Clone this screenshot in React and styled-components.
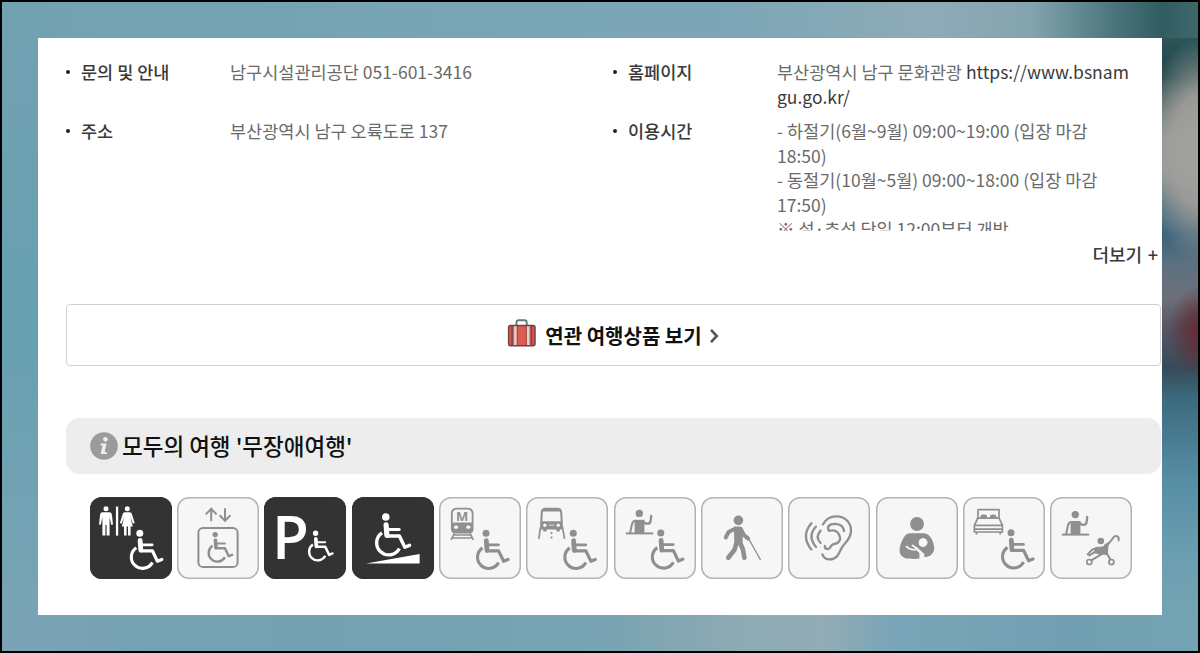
import React from "react";
import styled, { createGlobalStyle } from "styled-components";

const GlobalStyle = createGlobalStyle`
  * {
    box-sizing: border-box;
  }
  body {
    margin: 0;
    font-family: "Noto Sans CJK KR", "Noto Sans", sans-serif;
  }
`;

function Wheelchair({ x, y, scale = 1 }) {
  return (
    <g transform={`translate(${x} ${y}) scale(${scale})`}>
      <circle r="3.5" fill="currentColor" />
      <path d="M0.3 7.3L1 17" strokeWidth="4.8" />
      <path d="M1 11.6H12.4" strokeWidth="2.8" />
      <path d="M1 17.6H12.6L17.6 28L22 26.2" strokeWidth="3.2" />
      <path
        d="M-3.5 14.6A11.2 11.2 0 1 0 12.6 29.2"
        strokeWidth="3.1"
        strokeLinecap="butt"
      />
    </g>
  );
}

function Reception({ y = 0 }) {
  return (
    <g transform={`translate(0 ${y})`}>
      <circle cx="25.3" cy="16.4" r="3.7" fill="currentColor" />
      <path d="M20.6 22.8H30.4V36H20.6Z" fill="currentColor" stroke="none" />
      <path d="M21.5 23.8C18.4 23.8 18.2 26 17.8 28L16.2 35.5" strokeWidth="2" />
      <path d="M29.5 24.4C31 27.4 36.2 27.6 36.6 24L37.2 18.8" strokeWidth="2.3" />
      <path d="M11.8 36.4H39.2" strokeWidth="2" strokeLinecap="butt" />
    </g>
  );
}

function Toilet() {
  return (
    <>
      <g fill="currentColor" stroke="none">
        <circle cx="16" cy="11.8" r="2.5" />
        <path d="M12.6 15.3H19.4C21.4 15.3 21.8 16.7 22 18.2L23 27.4L21.2 27.8L19.6 20V38.6H16.6V28H15.4V38.6H12.4V20L10.8 27.8L9 27.4L10 18.2C10.2 16.7 10.6 15.3 12.6 15.3Z" />
        <path d="M25.9 9.5H28.2V38.6H25.9Z" />
        <circle cx="37.3" cy="11.8" r="2.5" />
        <path d="M35 15.3H39.6C41 15.3 41.6 16 42 17.4L44.7 26L43 26.8L40.2 19.6L42.8 29.6H40.6V38.6H38V29.6H36.6V38.6H34V29.6H31.8L34.4 19.6L31.6 26.8L29.9 26L32.6 17.4C33 16 33.6 15.3 35 15.3Z" />
      </g>
      <Wheelchair x={49.8} y={36.2} />
    </>
  );
}

function Elevator() {
  return (
    <>
      <path
        d="M34.2 24.3V12M28.8 17.4L34.2 11.8L39.6 17.4M48 11.3V23.6M42.6 18.2L48 23.8L53.4 18.2"
        strokeWidth="2"
        strokeLinecap="butt"
        strokeLinejoin="miter"
      />
      <rect x="21.4" y="31" width="39.2" height="39" rx="4.6" strokeWidth="2" />
      <Wheelchair x={38.2} y={37.6} scale={0.77} />
    </>
  );
}

function Parking() {
  return (
    <>
      <ParkingLetter x="8" y="62">
        P
      </ParkingLetter>
      <Wheelchair x={51.6} y={36.3} scale={0.77} />
    </>
  );
}

function Ramp() {
  return (
    <>
      <Wheelchair x={33.8} y={20} scale={1.08} />
      <path d="M14 66.4L67.6 57V66.4Z" fill="currentColor" stroke="none" />
    </>
  );
}

function Subway() {
  return (
    <>
      <path
        d="M18 11.6H28.4C32 11.6 33.6 14 33.6 17V31.8C33.6 34.2 32.2 35.6 30 35.6H16.4C14.2 35.6 12.8 34.2 12.8 31.8V17C12.8 14 14.4 11.6 18 11.6Z"
        strokeWidth="1.8"
      />
      <path
        d="M12.8 25.6H33.6V33C33.6 35 32 35.8 30 35.8H16.4C14.4 35.8 12.8 35 12.8 33Z"
        fill="currentColor"
        stroke="none"
      />
      <g fill="#f6f6f6" stroke="none">
        <rect x="15" y="28.4" width="4.2" height="3.4" rx="1.6" />
        <rect x="27.2" y="28.4" width="4.2" height="3.4" rx="1.6" />
      </g>
      <MetroLetter x="23.2" y="23.8">
        M
      </MetroLetter>
      <path
        d="M15.4 36.5L12 42.8M31 36.5L34.4 42.8M15 38H31.4M13.6 41H32.8"
        strokeWidth="1.6"
        strokeLinecap="butt"
      />
      <Wheelchair x={47} y={36.3} />
    </>
  );
}

function Bus() {
  return (
    <>
      <path
        d="M19 11.8H32C34.4 11.8 35 13.4 35.2 15.4L35.8 26V31.4H15.2V26L15.8 15.4C16 13.4 16.6 11.8 19 11.8Z"
        strokeWidth="2"
      />
      <path
        d="M17 12H34V14.4H17ZM15 24.2H36V32H33.8V34.4H30.4V32H20.6V34.4H17.2V32H15Z"
        fill="currentColor"
        stroke="none"
      />
      <g fill="#f6f6f6" stroke="none">
        <circle cx="18.8" cy="28.2" r="1.7" />
        <circle cx="32.2" cy="28.2" r="1.7" />
        <rect x="22.8" y="27.6" width="5.4" height="1.2" opacity="0.6" />
      </g>
      <path
        d="M14.6 30L12.8 41.8M36.4 30L38.6 41.8"
        strokeWidth="1.7"
        strokeLinecap="butt"
      />
      <path
        d="M25.5 35V37M25.5 39.4V41.6"
        strokeWidth="1.8"
        strokeLinecap="butt"
      />
      <Wheelchair x={47.3} y={36.3} />
    </>
  );
}

function Guide() {
  return (
    <>
      <Reception />
      <Wheelchair x={46.8} y={36} />
    </>
  );
}

function WhiteCane() {
  return (
    <>
      <circle cx="37.4" cy="23.4" r="4.8" fill="currentColor" />
      <path
        d="M33.4 29.6H38.8C41 30 41.6 31 42 33L41.4 47.6H33.4L33 36Z"
        fill="currentColor"
        stroke="none"
      />
      <path d="M34 31.8L27.6 35L24.8 40.4" strokeWidth="4" />
      <path d="M40 32.4L42.8 38L47 41.4" strokeWidth="4" />
      <path d="M35.6 46L33.4 53L27.2 60.8" strokeWidth="4.6" />
      <path d="M39.2 46L42 52.6L43.4 60.8" strokeWidth="4.6" />
      <path d="M47.6 41.6L59.4 62.6" strokeWidth="1.2" />
    </>
  );
}

function Ear() {
  return (
    <g strokeWidth="2.3">
      <path d="M35 27.4C38 21.6 43 19.2 48.4 19.3C57.6 19.5 63.4 26 63 34.4C62.6 41.4 58.4 44.6 55.2 48.4C51.2 53.2 51 62.4 41.8 62.4C37.8 62.4 35.4 60.4 34.4 57.4" />
      <path d="M40.4 33C38.6 27.6 44 26.8 47.6 26.8C52 27 55.4 29.6 56 34" />
      <path d="M41 33.8C44.6 33 48.6 33.4 50.6 36.8C54 42 51 46.6 46.2 47C41.8 47.4 43.4 52 39.8 52.2C37.8 52.2 36.8 50.8 36.8 49" />
      <path d="M23.4 26.2Q12.4 39 23.4 52.4" />
      <path d="M28 29.6Q19 39.6 28 50" />
      <path d="M32.6 33.6Q26.8 39.8 32.6 46" />
    </g>
  );
}

function Nursing() {
  return (
    <>
      <circle cx="41" cy="27" r="6.9" fill="currentColor" />
      <path
        d="M33.6 36.2H48.4C54 36.4 58 45 58.2 51C58.2 56.4 54 60.6 47.6 59.8V57.6L43.4 55.8V61.6C40 62.2 36 62 33 61.6C26.6 61.6 23 57.8 23.6 52C24.6 45.4 28.4 36.4 33.6 36.2Z"
        fill="currentColor"
        stroke="none"
      />
      <g stroke="#f6f6f6">
        <circle cx="47" cy="45.6" r="4" fill="#f6f6f6" />
        <path d="M30.6 49.6C33.4 52.6 38 53.4 41.6 52L36.6 48.4" strokeWidth="1.8" />
        <path d="M40.6 51.8L47.2 57.8L46.4 61.4" strokeWidth="2.6" />
      </g>
    </>
  );
}

function Room() {
  return (
    <>
      <path
        d="M15 21V12.6H36V21L39.4 28.2V35H11.4V28.2L15 21ZM14.4 21.2H36.4M11.4 28.4H39.4M11.4 32.2H39.4"
        strokeWidth="1.7"
      />
      <path
        d="M17.6 21V19C18 17 23.6 17 24 19V21ZM27 21V19C27.4 17 33 17 33.4 19V21Z"
        fill="currentColor"
        stroke="none"
      />
      <path d="M13.6 35V37.4M37.2 35V37.4" strokeWidth="1.8" strokeLinecap="butt" />
      <Wheelchair x={48} y={35.8} />
    </>
  );
}

function Stroller() {
  return (
    <>
      <Reception y={1.2} />
      <circle cx="50.8" cy="44" r="3.3" fill="currentColor" />
      <path
        d="M54.6 47.4L58.8 44.6L57.8 58L50 57.4L43.6 56L45.6 50L53 49.4Z"
        fill="currentColor"
        stroke="none"
      />
      <path d="M56 50L62.6 41.6C65.2 37.2 69.6 38.8 68.6 43.4" strokeWidth="2" />
      <path d="M47 51L42.2 52.8L37.6 57.4M45.6 54.6L39.4 58.4" strokeWidth="2" />
      <path d="M52 56.8L41.4 63.4M56.6 56L60.4 62.6" strokeWidth="2" />
      <circle cx="39.3" cy="65" r="2.5" strokeWidth="1.7" />
      <circle cx="61.4" cy="65" r="2.5" strokeWidth="1.7" />
    </>
  );
}

const facilities = [
  { id: "toilet", icon: Toilet, active: true },
  { id: "elevator", icon: Elevator },
  { id: "parking", icon: Parking, active: true },
  { id: "ramp", icon: Ramp, active: true },
  { id: "subway", icon: Subway },
  { id: "bus", icon: Bus },
  { id: "guide", icon: Guide },
  { id: "cane", icon: WhiteCane },
  { id: "ear", icon: Ear },
  { id: "nursing", icon: Nursing },
  { id: "room", icon: Room },
  { id: "stroller", icon: Stroller },
];

function SuitcaseIcon() {
  return (
    <svg width="30" height="32" viewBox="0 0 30 32">
      <path
        d="M9.5 8V3.4C9.5 2 10.3 1.2 11.6 1.2H17.6C18.9 1.2 19.7 2 19.7 3.4V8"
        fill="none"
        stroke="#66787c"
        strokeWidth="1.9"
      />
      <rect x="1.6" y="6.4" width="26.4" height="20.4" rx="2" fill="#dd5c51" />
      <path d="M5 6.6V26.6M24.6 6.6V26.6" stroke="#8c403d" strokeWidth="1.6" />
      <path d="M8.4 6.6V26.6M21.2 6.6V26.6" stroke="#d9dada" strokeWidth="2.4" />
      <path d="M10.4 6.6V26.6M19.2 6.6V26.6" stroke="#8d4a48" strokeWidth="0.8" />
      <rect
        x="1.6"
        y="6.4"
        width="26.4"
        height="20.4"
        rx="2"
        fill="none"
        stroke="#6b4446"
        strokeWidth="1.5"
      />
    </svg>
  );
}

function InfoIcon() {
  return (
    <svg width="28" height="28" viewBox="0 0 28 28">
      <circle cx="14" cy="14" r="13.8" fill="#9b9b9b" />
      <circle cx="15.4" cy="7.2" r="2.3" fill="#eee" />
      <path
        d="M10.8 11.6H16.6L14.6 20.2H17.2L16.8 22H10.6L12.6 13.4H10.4Z"
        fill="#eee"
      />
    </svg>
  );
}

function Info({ label, children }) {
  return (
    <InfoRow>
      <dt>{label}</dt>
      <dd>{children}</dd>
    </InfoRow>
  );
}

function App() {
  return (
    <>
      <GlobalStyle />
      <Backdrop>
        <Card>
          <InfoGrid>
            <Info label="문의 및 안내">남구시설관리공단 051-601-3416</Info>
            <Info label="홈페이지">
              부산광역시 남구 문화관광{" "}
              <a>
                https://www.bsnam
                <br />
                gu.go.kr/
              </a>
            </Info>
            <Info label="주소">부산광역시 남구 오륙도로 137</Info>
            <Info label="이용시간">
              - 하절기(6월~9월) 09:00~19:00 (입장 마감
              <br />
              18:50)
              <br />
              - 동절기(10월~5월) 09:00~18:00 (입장 마감
              <br />
              17:50)
              <br />※ 설·추석 당일 12:00부터 개방
            </Info>
          </InfoGrid>
          <MoreButton>더보기 +</MoreButton>
          <ProductButton>
            <SuitcaseIcon />
            <span>연관 여행상품 보기</span>
            <svg width="11" height="16" viewBox="0 0 11 16">
              <path
                d="M2 2.8L7.8 9L2 15.2"
                fill="none"
                stroke="#555"
                strokeWidth="2.6"
              />
            </svg>
          </ProductButton>
          <SectionTitle>
            <InfoIcon />
            <span>모두의 여행 '무장애여행'</span>
          </SectionTitle>
          <FacilityList>
            {facilities.map(({ id, icon: Icon, active }) => (
              <Facility key={id} $active={active}>
                <svg viewBox="0 0 82 82">
                  <Icon />
                </svg>
              </Facility>
            ))}
          </FacilityList>
        </Card>
      </Backdrop>
    </>
  );
}

const Backdrop = styled.div`
  width: 1200px;
  height: 653px;
  padding: 36px;
  overflow: hidden;
  border: 2px solid #000;
  background:
    radial-gradient(ellipse 30px 46px at 1196px 330px, #6a2932 0, rgba(95, 45, 55, 0.7) 40%, transparent 100%),
    radial-gradient(ellipse 62px 112px at 1200px 148px, #a5a39e 0, rgba(160, 159, 154, 0.9) 50%, transparent 100%),
    linear-gradient(
        to bottom,
        #2d5558 0,
        #1d454a 40px,
        #4d6468 70px,
        #8d9394 100px,
        #96999a 130px,
        #4d6f80 165px,
        #37607a 195px,
        #5c7180 225px,
        #6c7079 260px,
        #585562 290px,
        #364b5a 330px,
        #3c6a7e 360px,
        #568da3 440px,
        #6c9fb2 520px,
        #73a2b3 575px
      )
      right 36px / 42px 579px no-repeat,
    linear-gradient(
        to right,
        #72a1b2 0,
        #79a5b4 40%,
        #7ca6b6 60%,
        #8eabb7 78%,
        #83a4ae 86%,
        #4b757c 93%,
        #315c60 97%,
        #3f686b 100%
      )
      0 0 / 100% 38px no-repeat,
    linear-gradient(
        to right,
        #7aa3b5 0,
        #74a1b2 25%,
        #78a3b2 50%,
        #8fabb4 63%,
        #92abb5 69%,
        #7ba5b8 74%,
        #709fb1 90%,
        #74a3b3 100%
      )
      0 100% / 100% 38px no-repeat,
    linear-gradient(to bottom, #72a1b2, #67a0b1 50%, #7ba4b6);
`;

const Card = styled.main`
  width: 1124px;
  height: 577px;
  padding: 22px 1px 0 28px;
  background-color: #fff;
`;

const InfoGrid = styled.div`
  display: grid;
  grid-template-columns: 547px 547px;
  grid-template-rows: 49px 112px;
  row-gap: 10px;
`;

const InfoRow = styled.dl`
  display: flex;
  margin: 0;
  overflow: hidden;
  font-size: 17.5px;
  line-height: 24.5px;
  white-space: nowrap;
  color: #6a6a6a;
  dt {
    display: flex;
    align-items: center;
    width: 164px;
    height: 24.5px;
    font-weight: 500;
    color: #3a3a3a;
  }
  dt::before {
    content: "";
    width: 4px;
    height: 4px;
    margin-right: 11px;
    border-radius: 50%;
    background-color: #222;
  }
  dd {
    margin: 0;
  }
  a {
    color: #3a3a3a;
  }
`;

const MoreButton = styled.button`
  display: block;
  margin: 10px 3px 0 auto;
  padding: 0;
  border: 0;
  background: none;
  font: inherit;
  font-size: 18px;
  font-weight: 500;
  line-height: 26px;
  word-spacing: 1.5px;
  color: #3a3a3a;
`;

const ProductButton = styled.button`
  display: flex;
  align-items: center;
  justify-content: center;
  width: 1095px;
  height: 62px;
  margin-top: 37px;
  padding: 0;
  border: 1px solid #d2d2d2;
  border-radius: 4px;
  background-color: #fff;
  font: inherit;
  font-size: 20px;
  font-weight: 700;
  color: #111;
  span {
    margin: 0 7px 0 8px;
  }
`;

const SectionTitle = styled.h3`
  display: flex;
  align-items: center;
  gap: 4px;
  width: 1095px;
  height: 56px;
  margin: 52px 0 0;
  padding-left: 24px;
  border-radius: 14px;
  background-color: #ededed;
  font-size: 22.5px;
  font-weight: 500;
  line-height: 32px;
  color: #111;
  span {
    padding-bottom: 2px;
  }
`;

const FacilityList = styled.ul`
  display: flex;
  justify-content: space-between;
  width: 1043px;
  margin: 23px 0 0 23.5px;
  padding: 0;
  list-style: none;
`;

const Facility = styled.li`
  width: 82px;
  height: 82px;
  border-radius: 12px;
  color: ${({ $active }) => ($active ? "#fff" : "#8f8f8f")};
  background-color: ${({ $active }) => ($active ? "#333" : "#f6f6f6")};
  box-shadow: inset 0 0 0 1.5px ${({ $active }) => ($active ? "#333" : "#b3b3b3")};
  svg {
    display: block;
    overflow: visible;
    fill: none;
    stroke: currentColor;
    stroke-linecap: round;
    stroke-linejoin: round;
  }
  circle[fill="currentColor"] {
    stroke: none;
  }
`;

const ParkingLetter = styled.text`
  font-family: "Open Sans", sans-serif;
  font-size: 60px;
  font-weight: 600;
  fill: currentColor;
  stroke: none;
`;

const MetroLetter = styled.text`
  font-family: "Open Sans", sans-serif;
  font-size: 13px;
  font-weight: 700;
  text-anchor: middle;
  fill: currentColor;
  stroke: none;
`;

export default App;
